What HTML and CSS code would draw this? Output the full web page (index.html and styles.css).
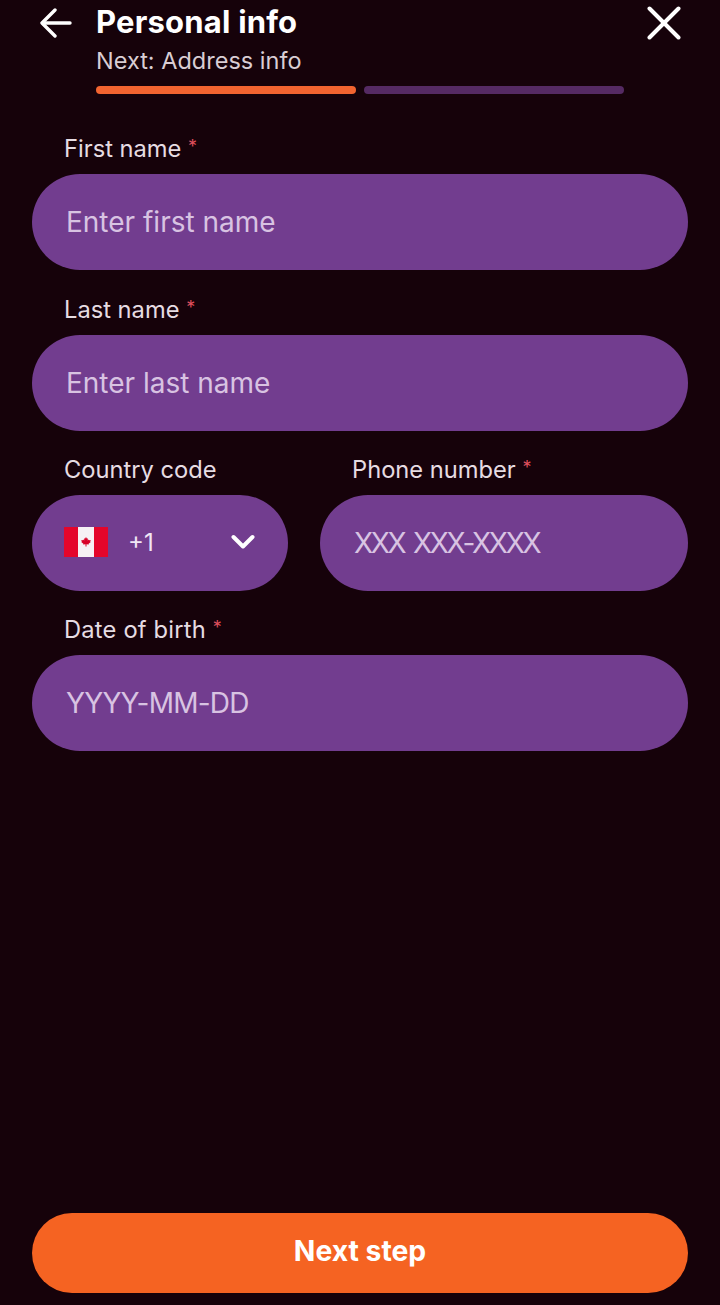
FILE: index.html
```html
<!DOCTYPE html>
<html>

<head>
    <meta charset="utf-8">
    <link rel="stylesheet" href="styles.css">
    <title>Personal info</title>
</head>

<body>
    <div class="page">
        <div class="header">
            <svg class="back" width="32" height="32" viewBox="0 0 32 32" fill="none" stroke="#fff" stroke-width="3.4" stroke-linecap="round" stroke-linejoin="round">
                <path d="M30 16H3"></path>
                <path d="M15 3L2 16l13 13"></path>
            </svg>
            <div class="titles">
                <div class="title">Personal info</div>
                <div class="subtitle">Next: Address info</div>
                <div class="progress">
                    <div class="step done"></div>
                    <div class="step"></div>
                </div>
            </div>
            <svg class="close" width="34" height="34" viewBox="0 0 34 34" fill="none" stroke="#fff" stroke-width="4" stroke-linecap="round">
                <path d="M2.500 2.500l29 29"></path>
                <path d="M31.500 2.500l-29 29"></path>
            </svg>
        </div>

        <form class="form">
            <div class="field first">
                <label class="label">First name <span class="req">*</span></label>
                <div class="input">Enter first name</div>
            </div>
            <div class="field">
                <label class="label">Last name <span class="req">*</span></label>
                <div class="input">Enter last name</div>
            </div>
            <div class="row">
                <div class="field code">
                    <label class="label">Country code</label>
                    <div class="input select">
                        <svg class="flag" width="44" height="30" viewBox="0 0 44 30">
                            <rect width="44" height="30" fill="#e4062b"></rect>
                            <rect x="14" width="16" height="30" fill="#f6f1f4"></rect>
                            <path fill="#d80027" d="M22 10l1 1.800 1-.5-.3 2.300 1.200-1.100.3.800 1.500-.2-.5 1.600.6.300-2.200 1.800.3.800-2.400-.3V19.500h-1V17.300l-2.400.3.300-.8-2.200-1.800.6-.3-.5-1.600 1.500.2.300-.8 1.200 1.100-.3-2.300 1 .5z"></path>
                        </svg>
                        <span class="dial">+1</span>
                        <svg class="chevron" width="24" height="16" viewBox="0 0 24 16" fill="none" stroke="#fff" stroke-width="4" stroke-linecap="round" stroke-linejoin="round">
                            <path d="M2.500 3L12 12.500 21.500 3"></path>
                        </svg>
                    </div>
                </div>
                <div class="field phone">
                    <label class="label">Phone number <span class="req">*</span></label>
                    <div class="input">XXX XXX-XXXX</div>
                </div>
            </div>
            <div class="field birth">
                <label class="label">Date of birth <span class="req">*</span></label>
                <div class="input">YYYY-MM-DD</div>
            </div>
        </form>

        <button class="next" type="button">Next step</button>
    </div>
</body>

</html>
```

FILE: styles.css
```css
* {
    box-sizing: border-box;
}

html,
body {
    margin: 0;
    height: 100%;
}

body {
    background: #16020a;
    font-family: "Inter", "Noto Sans", sans-serif;
    color: #fff;
}

.page {
    height: 1305px;
    padding: 0 32px 12px;
    display: flex;
    flex-direction: column;
}

.header {
    display: flex;
    height: 94px;
    padding-left: 8px;
}

.back {
    margin-top: 7px;
    flex: none;
}

.titles {
    margin-left: 24px;
    width: 528px;
}

.title {
    font-size: 31px;
    font-weight: 700;
    letter-spacing: 0.2px;
    line-height: 44px;
}

.subtitle {
    font-size: 23.500px;
    line-height: 34px;
    color: #d9cdd3;
}

.progress {
    display: flex;
    gap: 8px;
    margin-top: 8px;
}

.step {
    width: 260px;
    height: 8px;
    border-radius: 4px;
    background: #552a63;
}

.step.done {
    background: #f26430;
}

.close {
    flex: none;
    margin: 6px 0 0 23px;
}

.form {
    flex: 1;
    display: flex;
    flex-direction: column;
    gap: 20px;
    padding-top: 36px;
}

.field {
    display: flex;
    flex-direction: column;
}

.field.first {
    margin-bottom: 1px;
}

.label {
    display: block;
    padding-left: 32px;
    font-size: 23.700px;
    line-height: 38px;
    height: 44px;
    color: #e6dce2;
}

.birth .label {
    letter-spacing: 0.2px;
}

.req {
    color: #df4f5c;
    font-size: 18px;
    line-height: 0;
    vertical-align: 4px;
}

.input {
    height: 96px;
    border-radius: 48px;
    background: #723d8f;
    padding: 0 34px 1px;
    display: flex;
    align-items: center;
    font-size: 28px;
    color: #d8c3e2;
}

.row {
    display: flex;
    gap: 32px;
}

.code {
    width: 256px;
}

.phone {
    flex: 1;
}

.phone .input {
    letter-spacing: -2.300px;
    word-spacing: 3px;
}

.birth .input {
    letter-spacing: -0.800px;
}

.select {
    padding: 0 32px 2px;
}

.flag {
    flex: none;
}

.dial {
    margin-left: 20px;
    font-size: 24px;
    color: #f1e6f5;
    flex: 1;
}

.chevron {
    flex: none;
    margin-right: 1px;
}

.next {
    height: 80px;
    border: 0;
    border-radius: 40px;
    background: #f56322;
    color: #fff;
    padding: 0 0 4px;
    font: 700 28.300px "Inter", "Noto Sans", sans-serif;
}
```
